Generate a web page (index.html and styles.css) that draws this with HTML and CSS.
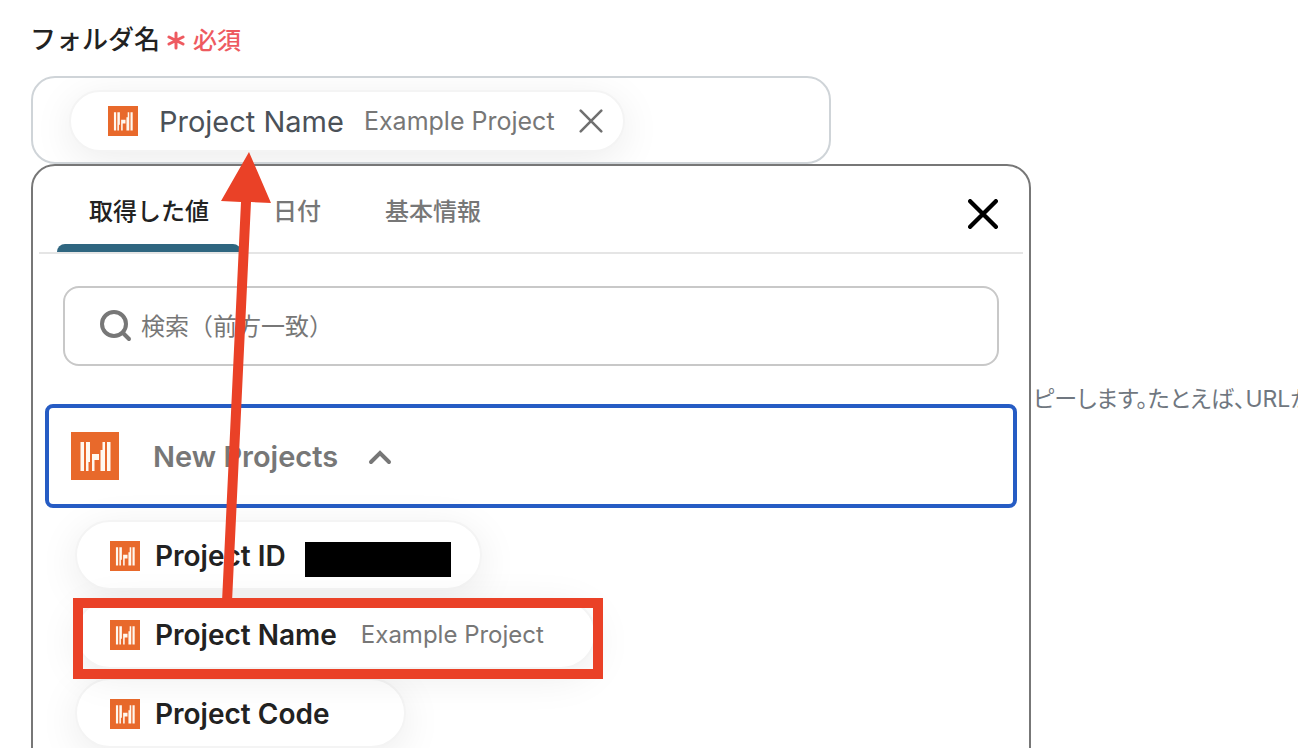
FILE: index.html
```html
<!DOCTYPE html>
<html lang="ja">
<head>
<meta charset="utf-8">
<title>フォルダ名</title>
<link rel="stylesheet" href="styles.css">
</head>
<body>
<svg class="defs" aria-hidden="true">
  <symbol id="logo" viewBox="0 0 48 48">
    <rect width="48" height="48" fill="#e8692b"/>
    <path fill="#fff8ef" d="M9.500 10h3.500v29H9.500zM15 10h4v20h-1.500v9H15zM21 22h7v6h-4.500v11H21zM29.500 18h2v-8H34v29h-4.500zM36 10h3.500v29H36z"/>
  </symbol>
  <symbol id="cross" viewBox="0 0 28 28">
    <path d="M2 2l24 24M26 2L2 26" fill="none" stroke="currentColor" stroke-linecap="round"/>
  </symbol>
</svg>
<main class="page">
  <div class="label-row">
    <span class="label" id="folder-label">フォルダ名</span>
    <span class="required">
      <svg width="18" height="28" viewBox="0 0 18 28" aria-hidden="true"><path d="M9 9v15M2 13l14 7M16 13L2 20" stroke="currentColor" stroke-width="3" stroke-linecap="round"/></svg>
      必須
    </span>
  </div>

  <div class="picker">
    <div class="field" role="group" aria-labelledby="folder-label">
      <div class="chip">
        <svg class="logo-small" aria-hidden="true"><use href="#logo"/></svg>
        <span class="chip-name">Project Name</span>
        <span class="sample">Example Project</span>
        <button class="chip-remove" type="button" aria-label="削除"><svg width="24" height="24" stroke-width="3" aria-hidden="true"><use href="#cross"/></svg></button>
      </div>
    </div>

    <section class="panel">
      <div class="tabs">
        <button class="tab active" type="button">取得した値</button>
        <button class="tab" type="button">日付</button>
        <button class="tab" type="button">基本情報</button>
        <button class="close" type="button" aria-label="閉じる"><svg width="30" height="30" stroke-width="4" aria-hidden="true"><use href="#cross"/></svg></button>
      </div>

      <label class="search">
        <svg width="34" height="34" viewBox="0 0 34 34" aria-hidden="true"><g fill="none" stroke="currentColor" stroke-width="4" stroke-linecap="round"><circle cx="15" cy="15" r="12"/><path d="M24 24l6 6"/></g></svg>
        <input type="search" placeholder="検索（前方一致）" aria-label="検索">
      </label>

      <button class="group" type="button" aria-expanded="true">
        <svg class="logo-large" aria-hidden="true"><use href="#logo"/></svg>
        <span class="group-name">New Projects</span>
        <svg width="24" height="20" viewBox="0 0 24 20" aria-hidden="true"><path d="M3 16l9-9 9 9" fill="none" stroke="currentColor" stroke-width="4" stroke-linecap="round"/></svg>
      </button>

      <div class="options">
        <button class="option" type="button">
          <svg class="logo-small" aria-hidden="true"><use href="#logo"/></svg>
          <span>Project ID</span>
          <span class="redacted"></span>
        </button>
        <div class="marked">
          <button class="option wide" type="button">
            <svg class="logo-small" aria-hidden="true"><use href="#logo"/></svg>
            <span>Project Name</span>
            <span class="sample">Example Project</span>
          </button>
        </div>
        <button class="option code" type="button">
          <svg class="logo-small" aria-hidden="true"><use href="#logo"/></svg>
          <span>Project Code</span>
        </button>
      </div>
    </section>
    <svg class="arrow" width="52" height="452" viewBox="0 0 52 452" aria-hidden="true"><path fill="#ea4127" d="M28 0l22 51-20-1L11 450H1L20 50l-20-1z"/></svg>
  </div>

  <p class="help">ピーします。たとえば、URLが</p>
</main>
</body>
</html>
```
FILE: styles.css
```css
* { box-sizing: border-box; }

body {
  margin: 0;
  height: 100vh;
  overflow: hidden;
  background: #fff;
  color: #222;
  font-family: Inter, "Noto Sans CJK JP", sans-serif;
}

button, input {
  margin: 0;
  padding: 0;
  border: 0;
  background: none;
  color: inherit;
  font: inherit;
}

svg { display: block; flex: none; }
.defs { position: absolute; width: 0; height: 0; }

.page { padding: 18px 0 0 30px; }

.label-row {
  display: flex;
  align-items: center;
  gap: 7px;
  height: 40px;
}

.label { padding-bottom: 2px; font-size: 26px; font-weight: 500; }

.required {
  display: flex;
  align-items: center;
  gap: 8px;
  color: #ee5a60;
  font-size: 24px;
  font-weight: 500;
}

.picker { position: relative; margin: 18px 0 0 1px; }

.field {
  display: flex;
  max-width: 800px;
  padding: 12px 36px 10px;
  border: 2px solid #cfd4d8;
  border-radius: 24px;
  overflow: hidden;
}

.chip {
  display: flex;
  align-items: center;
  height: 62px;
  padding: 0 20px 0 37px;
  border: 2px solid #f4f4f4;
  border-radius: 31px;
  background: #fff;
  box-shadow: 0 8px 40px rgba(0, 0, 0, .08);
  white-space: nowrap;
}

.logo-small { width: 30px; height: 30px; }
.logo-large { width: 48px; height: 48px; }

.chip-name { margin-left: 21px; color: #4b5158; font-size: 29px; }
.sample { color: #777; font-size: 24px; font-weight: 400; }
.chip .sample { margin-left: 20px; font-size: 25px; }
.chip-remove { margin-left: 24px; color: #707070; }

.panel {
  position: absolute;
  top: 100%;
  left: 0;
  width: 100%;
  max-width: 1000px;
  padding: 0 6px 48px;
  border: 2px solid #777;
  border-radius: 24px;
  background: #fff;
}

.tabs {
  display: flex;
  height: 88px;
  padding: 0 25px 0 18px;
  border-bottom: 2px solid #e5e5e5;
  color: #777;
  font-size: 24px;
  font-weight: 500;
}

.tab {
  position: relative;
  padding: 0 32px;
}

.tab.active { color: #222; }

.tab.active::after {
  content: "";
  position: absolute;
  right: 0;
  bottom: 0;
  left: 0;
  height: 8px;
  border-radius: 8px 8px 0 0;
  background: #2f6680;
}

.close { margin-left: auto; padding-top: 10px; color: #000; }

.search {
  display: flex;
  align-items: center;
  gap: 8px;
  height: 80px;
  margin: 32px 24px 0;
  padding: 0 34px;
  border: 2px solid #c8c8c8;
  border-radius: 16px;
  color: #777;
  font-size: 24px;
}

.search input { flex: 1; outline: 0; }
.search input::placeholder { color: #777; opacity: 1; }

.group {
  display: flex;
  align-items: center;
  width: calc(100% - 12px);
  height: 104px;
  margin: 38px 6px 0;
  padding: 0 22px;
  border: 4px solid #265cc4;
  border-radius: 8px;
  color: #777;
}

.group-name { margin: 0 30px 0 34px; font-size: 29px; font-weight: 600; }

.options {
  display: flex;
  flex-direction: column;
  align-items: flex-start;
  gap: 9px;
  padding: 12px 38px 0 36px;
}

.option {
  display: flex;
  align-items: center;
  height: 70px;
  padding: 1px 29px 0 33px;
  border: 2px solid #f4f4f4;
  border-radius: 35px;
  background: #fff;
  box-shadow: 0 8px 40px rgba(0, 0, 0, .08);
  font-size: 28px;
  font-weight: 600;
  white-space: nowrap;
}

.option .logo-small { margin-right: 15px; }
.option .sample { margin-left: 24px; }
.option.wide { padding-right: 50px; }
.option.code { padding-right: 75px; }

.redacted {
  width: 146px;
  height: 35px;
  margin: 8px 0 0 19px;
  background: #000;
}

.marked { position: relative; }

.marked::after {
  content: "";
  position: absolute;
  inset: -1px -7px -10px -2px;
  border: 10px solid #ea4127;
}

.arrow {
  position: absolute;
  top: 76px;
  left: 190px;
}

.help {
  margin: 215px 0 0 1003px;
  color: #707780;
  font-size: 23px;
  font-feature-settings: "palt";
  line-height: 40px;
  white-space: nowrap;
}
```
